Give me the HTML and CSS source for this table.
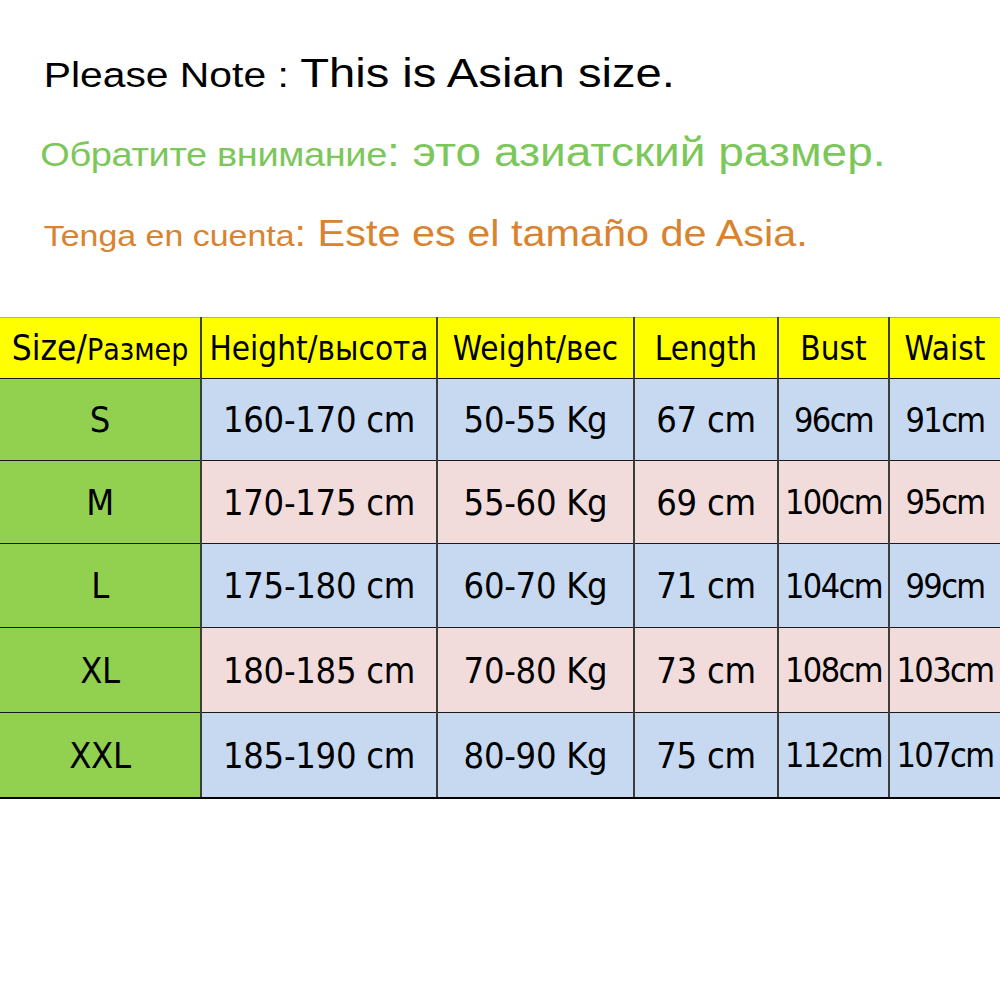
FILE: index.html
```html
<!DOCTYPE html>
<html lang="en">
<head>
<meta charset="utf-8">
<title>Size chart</title>
<link rel="stylesheet" href="styles.css">
</head>
<body>
<div class="notes">
  <div class="line line-en"><span class="small">Please Note : </span>This is Asian size.</div>
  <div class="line line-ru"><span class="small">Обратите внимание</span>: это азиатский размер.</div>
  <div class="line line-es"><span class="small">Tenga en cuenta</span>: Este es el tamaño de Asia.</div>
</div>
<table class="chart">
  <colgroup>
    <col class="c1"><col class="c2"><col class="c3"><col class="c4"><col class="c5"><col class="c6">
  </colgroup>
  <thead>
    <tr>
      <th>Size/<span class="ru">Размер</span></th>
      <th>Height/высота</th>
      <th>Weight/вес</th>
      <th>Length</th>
      <th>Bust</th>
      <th>Waist</th>
    </tr>
  </thead>
  <tbody>
    <tr class="blue r1"><td class="size">S</td><td>160-170 cm</td><td>50-55 Kg</td><td>67 cm</td><td class="narrow">96cm</td><td class="narrow">91cm</td></tr>
    <tr class="pink r2"><td class="size">M</td><td>170-175 cm</td><td>55-60 Kg</td><td>69 cm</td><td class="narrow">100cm</td><td class="narrow">95cm</td></tr>
    <tr class="blue r3"><td class="size">L</td><td>175-180 cm</td><td>60-70 Kg</td><td>71 cm</td><td class="narrow">104cm</td><td class="narrow">99cm</td></tr>
    <tr class="pink r4"><td class="size">XL</td><td>180-185 cm</td><td>70-80 Kg</td><td>73 cm</td><td class="narrow">108cm</td><td class="narrow">103cm</td></tr>
    <tr class="blue r5"><td class="size">XXL</td><td>185-190 cm</td><td>80-90 Kg</td><td>75 cm</td><td class="narrow">112cm</td><td class="narrow">107cm</td></tr>
  </tbody>
</table>
</body>
</html>
```

FILE: styles.css
```css
html, body {
  margin: 0;
  padding: 0;
  background: #ffffff;
}

.notes {
  font-family: "Liberation Sans", Arial, sans-serif;
  padding-top: 49px;
}

.line {
  box-sizing: border-box;
  width: 869px;
  white-space: nowrap;
  line-height: 48px;
  height: 48px;
  transform: scaleX(1.15);
  transform-origin: left center;
}

.line-en {
  font-size: 41px;
  color: #000000;
  padding-left: 38px;
}
.line-en .small { font-size: 35.5px; }

.line-ru {
  font-size: 40px;
  color: #7cc75a;
  padding-left: 35px;
  margin-top: 31px;
}
.line-ru .small { font-size: 33px; letter-spacing: -0.3px; }

.line-es {
  font-size: 36px;
  color: #d9832e;
  padding-left: 38px;
  margin-top: 34px;
}
.line-es .small { font-size: 29.5px; }

.chart {
  margin-top: 59px;
  width: 1000px;
  border-collapse: collapse;
  table-layout: fixed;
  font-family: "DejaVu Sans Condensed", Tahoma, sans-serif;
  color: #000000;
}

.c1 { width: 201px; }
.c2 { width: 236px; }
.c3 { width: 197px; }
.c4 { width: 144px; }
.c5 { width: 111px; }
.c6 { width: 111px; }

.chart th,
.chart td {
  padding: 0;
  text-align: center;
  vertical-align: middle;
  white-space: nowrap;
  border-left: 2px solid #3c3c3c;
  border-top: 1px solid #1a1a1a;
}

.chart th:first-child,
.chart td:first-child {
  border-left: none;
}

.chart thead th {
  background: #ffff00;
  font-weight: normal;
  font-size: 33px;
  height: 60px;
  border-top: 1px solid #a8a8c8;
  border-bottom: 1px solid #1a1a1a;
}

.chart thead th:first-child {
  font-size: 35px;
}
.chart thead .ru {
  font-size: 30px;
}

.chart td {
  font-size: 36px;
  letter-spacing: -0.3px;
}

.chart td.narrow {
  font-size: 34px;
  letter-spacing: -1.6px;
}

.chart .r1 td { height: 81px; }
.chart .r2 td { height: 82px; }
.chart .r3 td { height: 83px; }
.chart .r4 td { height: 84px; }
.chart .r5 td { height: 84px; border-bottom: 2px solid #000000; }

.chart .blue td { background: #c6d9f0; }
.chart .pink td { background: #f2dcdb; }
.chart td.size { background: #92d050; }
```
